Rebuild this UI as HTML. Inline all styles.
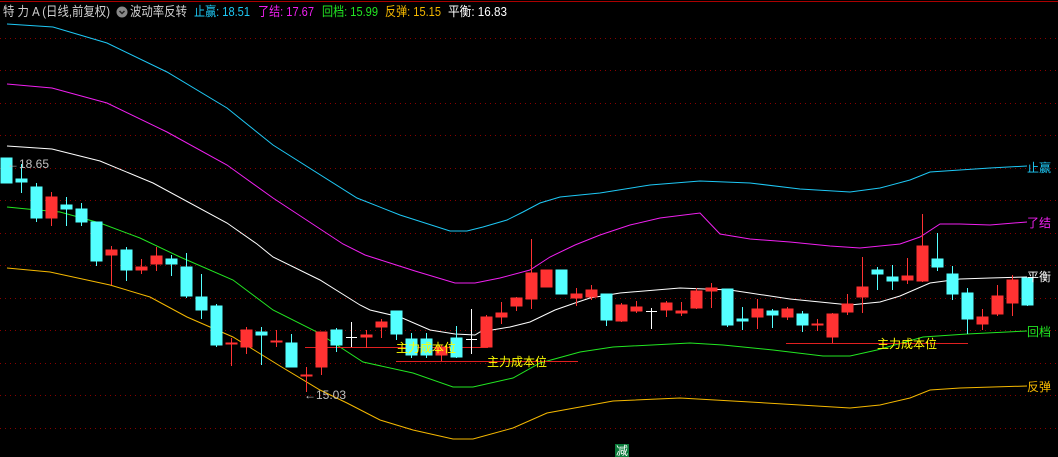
<!DOCTYPE html>
<html><head><meta charset="utf-8"><style>
html,body{margin:0;padding:0;background:#000;width:1058px;height:457px;overflow:hidden}
svg{display:block}
text{font-family:"Liberation Sans","Noto Sans CJK SC",sans-serif}
</style></head><body>
<svg width="1058" height="457" viewBox="0 0 1058 457" xmlns="http://www.w3.org/2000/svg">
<rect width="1058" height="457" fill="#000"/>
<line x1="0" y1="1.5" x2="1058" y2="1.5" stroke="#a00" stroke-width="1"/>
<g stroke="#8a0000" stroke-width="1" stroke-dasharray="1,4">
<line x1="0" y1="38.5" x2="1058" y2="38.5"/><line x1="0" y1="70.5" x2="1058" y2="70.5"/>
<line x1="0" y1="103.5" x2="1058" y2="103.5"/><line x1="0" y1="135.5" x2="1058" y2="135.5"/>
<line x1="0" y1="168.5" x2="1058" y2="168.5"/><line x1="0" y1="200.5" x2="1058" y2="200.5"/>
<line x1="0" y1="233.5" x2="1058" y2="233.5"/><line x1="0" y1="265.5" x2="1058" y2="265.5"/>
<line x1="0" y1="298.5" x2="1058" y2="298.5"/><line x1="0" y1="330.5" x2="1058" y2="330.5"/>
<line x1="0" y1="363.5" x2="1058" y2="363.5"/><line x1="0" y1="395.5" x2="1058" y2="395.5"/>
<line x1="0" y1="428.5" x2="1058" y2="428.5"/>
</g>
<g fill="none" stroke-width="1">
<polyline stroke="#1ec8f5" points="7,24 53,27 107,43 167,72 227,108 273,145 357,198 400,215 450,231 467,231 483,227 507,220 523,212 540,203 560,197 600,193 650,185 700,181 750,183 800,189 850,192 880,188 910,180 930,172 960,170 990,168 1027,166"/>
<polyline stroke="#f020f0" points="7,84 52,88 107,103 167,132 227,165 273,198 343,244 365,255 390,263 415,271 455,283 475,283 500,278 530,270 550,257 575,245 600,235 630,225 660,218 700,213 720,234 750,239 790,242 830,246 860,248 900,244 920,237 940,224 960,224 990,225 1027,222"/>
<polyline stroke="#fff" points="7,146 52,149 100,161 153,183 227,223 257,244 273,257 320,280 360,305 370,310 400,317 430,330 455,334 475,335 480,332 510,327 530,322 555,310 575,303 590,298 620,293 680,288 730,290 750,293 790,299 820,302 850,305 880,302 900,296 930,283 960,279 990,278 1027,277"/>
<polyline stroke="#22e622" points="7,207 27,209 60,212 100,223 140,238 180,257 233,280 273,310 317,332 363,362 413,373 453,387 473,387 513,378 540,363 580,352 613,347 690,343 723,345 773,350 823,356 850,356 877,350 923,337 967,334 1027,331"/>
<polyline stroke="#f5b800" points="7,268 50,272 110,285 150,297 187,317 233,337 280,366 320,390 347,403 380,420 413,430 453,439 473,439 513,428 547,413 580,407 613,401 680,398 750,402 800,405 850,408 880,405 910,398 930,390 960,388 1027,386"/>
</g>
<g stroke="#e02020" stroke-width="1">
<line x1="305" y1="347.5" x2="488" y2="347.5"/>
<line x1="396" y1="361.5" x2="578" y2="361.5"/>
<line x1="786" y1="343.5" x2="968" y2="343.5"/>
</g>
<g stroke-width="1">
<g fill="#54ffff" stroke="#54ffff">
<rect x="1" y="158" width="11" height="25"/>
<line x1="21.5" y1="164" x2="21.5" y2="193"/><rect x="16" y="179" width="11" height="3"/>
<line x1="36.5" y1="183" x2="36.5" y2="222"/><rect x="31" y="187" width="11" height="31"/>
<line x1="66.5" y1="197" x2="66.5" y2="226"/><rect x="61" y="205" width="11" height="4"/>
<line x1="81.5" y1="203" x2="81.5" y2="226"/><rect x="76" y="209" width="11" height="13"/>
<line x1="96.5" y1="222" x2="96.5" y2="266"/><rect x="91" y="222" width="11" height="39"/>
<line x1="126.5" y1="247" x2="126.5" y2="281"/><rect x="121" y="250" width="11" height="20"/>
<line x1="171.5" y1="255" x2="171.5" y2="276"/><rect x="166" y="259" width="11" height="5"/>
<line x1="186.5" y1="253" x2="186.5" y2="298"/><rect x="181" y="267" width="11" height="29"/>
<line x1="201.5" y1="274" x2="201.5" y2="319"/><rect x="196" y="297" width="11" height="13"/>
<line x1="216.5" y1="304" x2="216.5" y2="347"/><rect x="211" y="306" width="11" height="39"/>
<line x1="261.5" y1="327" x2="261.5" y2="365"/><rect x="256" y="332" width="11" height="3"/>
<line x1="291.5" y1="334" x2="291.5" y2="367"/><rect x="286" y="343" width="11" height="24"/>
<line x1="336.5" y1="328" x2="336.5" y2="352"/><rect x="331" y="330" width="11" height="15"/>
<line x1="396.5" y1="311" x2="396.5" y2="340"/><rect x="391" y="311" width="11" height="23"/>
<line x1="411.5" y1="333" x2="411.5" y2="358"/><rect x="406" y="339" width="11" height="16"/>
<line x1="426.5" y1="333" x2="426.5" y2="358"/><rect x="421" y="339" width="11" height="16"/>
<line x1="456.5" y1="326" x2="456.5" y2="358"/><rect x="451" y="338" width="11" height="19"/>
<rect x="556" y="270" width="11" height="24"/>
<line x1="606.5" y1="294" x2="606.5" y2="326"/><rect x="601" y="294" width="11" height="26"/>
<line x1="727.5" y1="289" x2="727.5" y2="327"/><rect x="722" y="289" width="11" height="36"/>
<line x1="742.5" y1="307" x2="742.5" y2="330"/><rect x="737" y="319" width="11" height="2"/>
<line x1="772.5" y1="309" x2="772.5" y2="328"/><rect x="767" y="311" width="11" height="4"/>
<line x1="802.5" y1="311" x2="802.5" y2="332"/><rect x="797" y="314" width="11" height="11"/>
<line x1="877.5" y1="267" x2="877.5" y2="290"/><rect x="872" y="270" width="11" height="4"/>
<line x1="892.5" y1="265" x2="892.5" y2="290"/><rect x="887" y="277" width="11" height="4"/>
<line x1="937.5" y1="233" x2="937.5" y2="271"/><rect x="932" y="259" width="11" height="8"/>
<line x1="952.5" y1="266" x2="952.5" y2="300"/><rect x="947" y="274" width="11" height="20"/>
<line x1="967.5" y1="288" x2="967.5" y2="334"/><rect x="962" y="293" width="11" height="26"/>
<line x1="1027.5" y1="278" x2="1027.5" y2="306"/><rect x="1022" y="278" width="11" height="27"/>
</g>
<g fill="#ff3232" stroke="#ff3232">
<line x1="51.5" y1="192" x2="51.5" y2="226"/><rect x="46" y="197" width="11" height="21"/>
<line x1="111.5" y1="246" x2="111.5" y2="285"/><rect x="106" y="250" width="11" height="5"/>
<line x1="141.5" y1="259" x2="141.5" y2="274"/><rect x="136" y="267" width="11" height="3"/>
<line x1="156.5" y1="247" x2="156.5" y2="271"/><rect x="151" y="256" width="11" height="8"/>
<line x1="231.5" y1="338" x2="231.5" y2="366"/><rect x="226" y="343" width="11" height="1"/>
<line x1="246.5" y1="327" x2="246.5" y2="354"/><rect x="241" y="330" width="11" height="17"/>
<line x1="276.5" y1="330" x2="276.5" y2="347"/><rect x="271" y="341" width="11" height="1"/>
<line x1="306.5" y1="367" x2="306.5" y2="392"/><rect x="301" y="375" width="11" height="1"/>
<line x1="321.5" y1="332" x2="321.5" y2="375"/><rect x="316" y="332" width="11" height="35"/>
<line x1="366.5" y1="330" x2="366.5" y2="348"/><rect x="361" y="335" width="11" height="2"/>
<line x1="381.5" y1="319" x2="381.5" y2="338"/><rect x="376" y="322" width="11" height="5"/>
<line x1="441.5" y1="345" x2="441.5" y2="361"/><rect x="436" y="347" width="11" height="8"/>
<line x1="486.5" y1="315" x2="486.5" y2="347"/><rect x="481" y="317" width="11" height="30"/>
<line x1="501.5" y1="302" x2="501.5" y2="324"/><rect x="496" y="313" width="11" height="4"/>
<line x1="516.5" y1="297" x2="516.5" y2="311"/><rect x="511" y="298" width="11" height="8"/>
<line x1="531.5" y1="239" x2="531.5" y2="309"/><rect x="526" y="273" width="11" height="26"/>
<rect x="541" y="270" width="11" height="17"/>
<line x1="576.5" y1="288" x2="576.5" y2="306"/><rect x="571" y="294" width="11" height="4"/>
<line x1="591.5" y1="285" x2="591.5" y2="300"/><rect x="586" y="290" width="11" height="7"/>
<line x1="621.5" y1="303" x2="621.5" y2="322"/><rect x="616" y="305" width="11" height="16"/>
<line x1="636.5" y1="301" x2="636.5" y2="313"/><rect x="631" y="307" width="11" height="4"/>
<line x1="666.5" y1="301" x2="666.5" y2="317"/><rect x="661" y="303" width="11" height="7"/>
<line x1="681.5" y1="302" x2="681.5" y2="316"/><rect x="676" y="311" width="11" height="2"/>
<line x1="696.5" y1="288" x2="696.5" y2="309"/><rect x="691" y="291" width="11" height="17"/>
<line x1="711.5" y1="283" x2="711.5" y2="308"/><rect x="706" y="288" width="11" height="3"/>
<line x1="757.5" y1="299" x2="757.5" y2="329"/><rect x="752" y="309" width="11" height="8"/>
<line x1="787.5" y1="307" x2="787.5" y2="320"/><rect x="782" y="309" width="11" height="8"/>
<line x1="817.5" y1="319" x2="817.5" y2="331"/><rect x="812" y="324" width="11" height="1"/>
<line x1="832.5" y1="313" x2="832.5" y2="343"/><rect x="827" y="314" width="11" height="23"/>
<line x1="847.5" y1="294" x2="847.5" y2="315"/><rect x="842" y="304" width="11" height="8"/>
<line x1="862.5" y1="257" x2="862.5" y2="313"/><rect x="857" y="287" width="11" height="10"/>
<line x1="907.5" y1="258" x2="907.5" y2="284"/><rect x="902" y="276" width="11" height="4"/>
<line x1="922.5" y1="214" x2="922.5" y2="282"/><rect x="917" y="246" width="11" height="35"/>
<line x1="982.5" y1="309" x2="982.5" y2="330"/><rect x="977" y="317" width="11" height="7"/>
<line x1="997.5" y1="285" x2="997.5" y2="316"/><rect x="992" y="296" width="11" height="18"/>
<line x1="1012.5" y1="275" x2="1012.5" y2="316"/><rect x="1007" y="280" width="11" height="23"/>
</g>
<g stroke="#fff">
<line x1="351.5" y1="322" x2="351.5" y2="347"/><line x1="346" y1="337.5" x2="357" y2="337.5"/>
<line x1="471.5" y1="309" x2="471.5" y2="354"/><line x1="466" y1="339.5" x2="477" y2="339.5"/>
<line x1="651.5" y1="308" x2="651.5" y2="329"/><line x1="646" y1="311.5" x2="657" y2="311.5"/>
</g>
</g>
<g font-size="12" fill="#ffff00">
<text x="396" y="352">主力成本位</text>
<text x="487" y="366">主力成本位</text>
<text x="877" y="348">主力成本位</text>
</g>
<g font-size="12" fill="#c0c0c0">
<text x="7" y="168">←18.65</text>
<text x="304" y="399">←15.03</text>
</g>
<g font-size="12">
<text x="1027" y="172" fill="#1ec8f5">止赢</text>
<text x="1027" y="227" fill="#f020f0">了结</text>
<text x="1027" y="281" fill="#fff">平衡</text>
<text x="1027" y="336" fill="#22e622">回档</text>
<text x="1027" y="391" fill="#f5b800">反弹</text>
</g>
<rect x="615" y="444" width="14" height="13" fill="#0a7a3a"/>
<text x="616" y="455" font-size="12" fill="#fff">减</text>
<g font-size="13">
<text x="3" y="16" fill="#d0d0d0" textLength="107" lengthAdjust="spacingAndGlyphs">特 力 A (日线,前复权)</text>
<circle cx="122" cy="12" r="5.5" fill="#888"/>
<path d="M119.5,11 L122,13.5 L124.5,11" stroke="#222" stroke-width="1.5" fill="none"/>
<text x="130" y="16" fill="#d0d0d0" textLength="57" lengthAdjust="spacingAndGlyphs">波动率反转</text>
<text x="194" y="16" fill="#1ec8f5" textLength="56" lengthAdjust="spacingAndGlyphs">止赢: 18.51</text>
<text x="258" y="16" fill="#f020f0" textLength="56" lengthAdjust="spacingAndGlyphs">了结: 17.67</text>
<text x="322" y="16" fill="#22e622" textLength="56" lengthAdjust="spacingAndGlyphs">回档: 15.99</text>
<text x="385" y="16" fill="#f5b800" textLength="56" lengthAdjust="spacingAndGlyphs">反弹: 15.15</text>
<text x="448" y="16" fill="#fff" textLength="59" lengthAdjust="spacingAndGlyphs">平衡: 16.83</text>
</g>
</svg>
</body></html>
